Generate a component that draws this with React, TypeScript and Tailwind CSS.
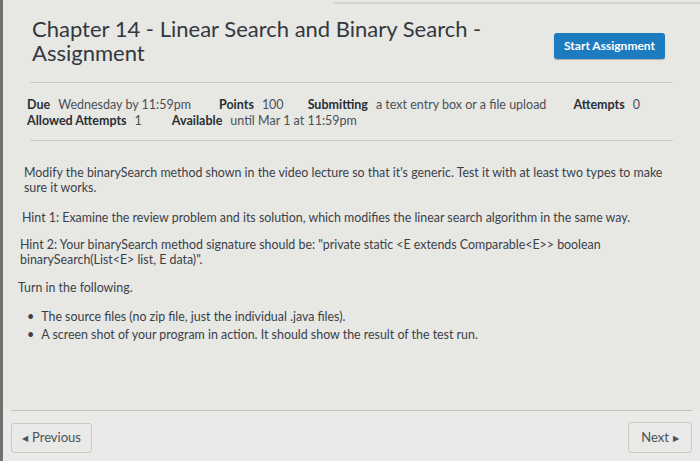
import { ReactNode } from 'react'

function Meta({ label, value, className = '' }: { label: string; value: string; className?: string }) {
  return (
    <span className={`whitespace-nowrap ${className}`}>
      <span className="font-bold text-[#2a2f33]">{label}</span>
      <span className="ml-[8px] text-[#4a5157]">{value}</span>
    </span>
  )
}

function Para({ children, className = '' }: { children: ReactNode; className?: string }) {
  return <p className={`text-[12.4px] leading-[15px] text-[#3a4148] ${className}`}>{children}</p>
}

export default function App() {
  return (
    <div
      className="relative h-[461px] w-[700px] overflow-hidden border-l-[3px] border-[#6f6f6d] bg-[#e7e7e4]"
      style={{ fontFamily: 'Lato, "Open Sans", sans-serif' }}
    >
      <div className="mt-[2px] ml-[330px] h-[2px] bg-[#d4d4d0]" />
      <div className="flex items-start justify-between pl-[29px] pr-[35px] pt-[13px]">
        <h1 className="text-[22px] leading-[24px] font-normal text-[#32383d]">
          Chapter 14 - Linear Search and Binary Search -
          <br />
          Assignment
        </h1>
        <button className="mt-[16px] rounded-[3px] bg-[#1d7cc0] px-[10px] py-[6px] text-[12px] font-bold leading-[14px] text-white shadow-[0_1px_1px_rgba(0,0,0,0.25)]">
          Start Assignment
        </button>
      </div>

      <div className="mx-[27px] mt-[17px] h-px bg-[#c9c9c5]" />

      <div className="pl-[24px] pr-[40px] pt-[14px] text-[12.5px] leading-[16px]">
        <div className="flex">
          <Meta label="Due" value="Wednesday by 11:59pm" />
          <Meta label="Points" value="100" className="ml-[28px]" />
          <Meta label="Submitting" value="a text entry box or a file upload" className="ml-[24px]" />
          <Meta label="Attempts" value="0" className="ml-[27px]" />
        </div>
        <div className="flex">
          <Meta label="Allowed Attempts" value="1" />
          <Meta label="Available" value="until Mar 1 at 11:59pm" className="ml-[30px]" />
        </div>
      </div>

      <div className="mx-[27px] mt-[11px] h-px bg-[#c9c9c5]" />

      <div className="pr-[30px] pt-[24px]">
        <Para className="ml-[21px]">
          Modify the binarySearch method shown in the video lecture so that it's generic. Test it with at least two types to make
          <br />
          sure it works.
        </Para>
        <Para className="ml-[19px] mt-[15px]">
          Hint 1: Examine the review problem and its solution, which modifies the linear search algorithm in the same way.
        </Para>
        <Para className="ml-[17px] mt-[12px]">
          Hint 2: Your binarySearch method signature should be: "private static &lt;E extends Comparable&lt;E&gt;&gt; boolean
          <br />
          binarySearch(List&lt;E&gt; list, E data)".
        </Para>
        <Para className="ml-[15px] mt-[13px]">Turn in the following.</Para>
        <ul className="ml-[24px] mt-[14px] space-y-[3px]">
          <li className="flex items-start">
            <span className="mr-[7px] text-[12.5px] leading-[15px] text-[#3a4148]">•</span>
            <Para>The source files (no zip file, just the individual .java files).</Para>
          </li>
          <li className="flex items-start">
            <span className="mr-[7px] text-[12.5px] leading-[15px] text-[#3a4148]">•</span>
            <Para>A screen shot of your program in action. It should show the result of the test run.</Para>
          </li>
        </ul>
      </div>

      <div className="absolute bottom-0 left-0 right-0 bg-[#eaeae8]">
        <div className="mx-[8px] h-px bg-[#bfbfbb]" />
        <div className="flex items-center justify-between px-[8px] pb-[8px] pt-[11px]">
          <button className="flex h-[30px] items-center rounded-[3px] border border-[#c8c8c4] bg-[#e9e9e7] px-[10px] text-[13px] text-[#4a5157]">
            <span className="mr-[4px] text-[8px]">◀</span>Previous
          </button>
          <button className="flex h-[31px] items-center rounded-[3px] border border-[#c8c8c4] bg-[#e9e9e7] px-[12px] text-[13px] text-[#4a5157]">
            Next<span className="ml-[4px] text-[8px]">▶</span>
          </button>
        </div>
      </div>
    </div>
  )
}
